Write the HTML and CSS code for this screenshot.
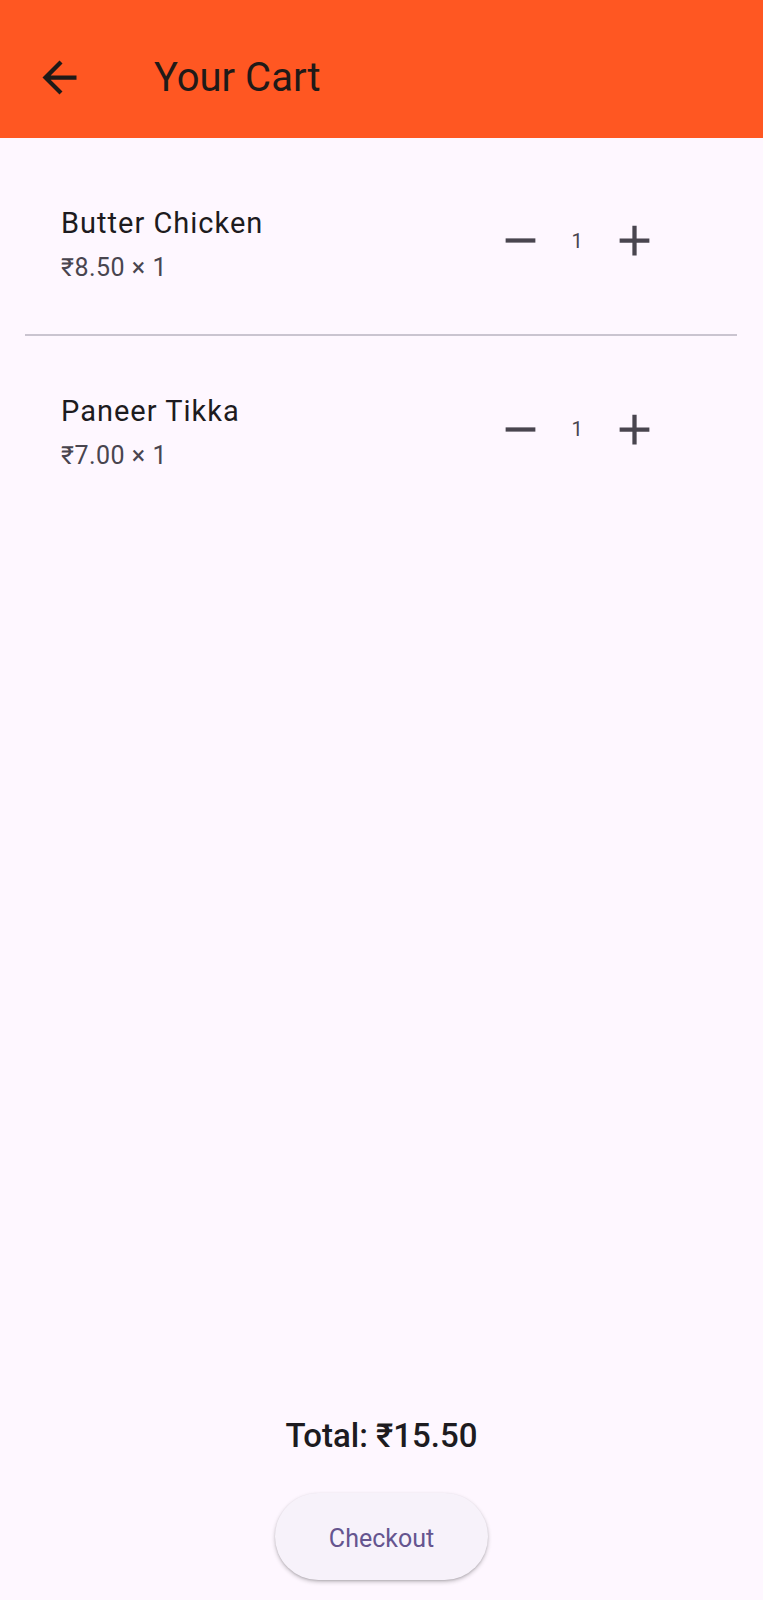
FILE: index.html
```html
<!DOCTYPE html>
<html lang="en">
<head>
<meta charset="utf-8">
<title>Your Cart</title>
<link rel="stylesheet" href="styles.css">
</head>
<body>
<div class="screen">
  <header class="appbar">
    <button class="back" aria-label="Back">
      <svg viewBox="0 0 24 24" width="51" height="51"><path d="M20 11H7.83l5.59-5.59L12 4l-8 8 8 8 1.41-1.41L7.83 13H20v-2z"/></svg>
    </button>
    <h1 class="title">Your Cart</h1>
  </header>
  <main class="list">
    <div class="tile">
      <div class="text">
        <div class="name">Butter Chicken</div>
        <div class="price">₹8.50 × 1</div>
      </div>
      <div class="qty">
        <button class="icon-btn" aria-label="Decrease"><svg viewBox="0 0 24 24" width="51" height="51"><path d="M19 13H5v-2h14v2z"/></svg></button>
        <span class="count">1</span>
        <button class="icon-btn" aria-label="Increase"><svg viewBox="0 0 24 24" width="51" height="51"><path d="M19 13h-6v6h-2v-6H5v-2h6V5h2v6h6v2z"/></svg></button>
      </div>
    </div>
    <div class="divider"></div>
    <div class="tile">
      <div class="text">
        <div class="name">Paneer Tikka</div>
        <div class="price">₹7.00 × 1</div>
      </div>
      <div class="qty">
        <button class="icon-btn" aria-label="Decrease"><svg viewBox="0 0 24 24" width="51" height="51"><path d="M19 13H5v-2h14v2z"/></svg></button>
        <span class="count">1</span>
        <button class="icon-btn" aria-label="Increase"><svg viewBox="0 0 24 24" width="51" height="51"><path d="M19 13h-6v6h-2v-6H5v-2h6V5h2v6h6v2z"/></svg></button>
      </div>
    </div>
  </main>
  <footer class="footer">
    <div class="total">Total: ₹15.50</div>
    <button class="checkout">Checkout</button>
  </footer>
</div>
</body>
</html>
```

FILE: styles.css
```css
* { box-sizing: border-box; }
html, body { margin: 0; padding: 0; }
body {
  background: #fef7ff;
  font-family: Roboto, "Noto Sans", "DejaVu Sans", sans-serif;
  color: #1d1b20;
}
button { font-family: inherit; border: none; background: none; padding: 0; margin: 0; cursor: pointer; }
.screen {
  height: 100vh;
  display: flex;
  flex-direction: column;
}
.appbar {
  height: 138px;
  flex: none;
  background: #ff5722;
  display: flex;
  align-items: center;
  padding-top: 17px;
  padding-left: 34px;
}
.back {
  width: 51px;
  height: 51px;
  display: flex;
  align-items: center;
  justify-content: center;
  fill: #1f1a18;
}
.back svg { display: block; }
.title {
  margin: 0 0 0 69px;
  font-size: 40px;
  font-weight: 400;
  color: #1f1a18;
  line-height: 1;
}
.list {
  flex: 1;
  padding: 9px 26px 0 25px;
}
.tile {
  height: 186px;
  display: flex;
  align-items: center;
  padding-left: 36px;
  padding-right: 52px;
}
.tile:first-child { height: 187px; }
.text { flex: 1; }
.name {
  font-size: 29px;
  line-height: 53px;
  letter-spacing: 1px;
  color: #1d1b20;
}
.price {
  font-size: 25px;
  line-height: 35px;
  letter-spacing: 0.5px;
  color: #49454f;
}
.qty {
  display: flex;
  align-items: center;
}
.icon-btn {
  width: 102px;
  height: 102px;
  display: flex;
  align-items: center;
  justify-content: center;
  fill: #49454f;
}
.icon-btn svg { display: block; }
.count {
  font-size: 20px;
  color: #49454f;
  width: 12px;
  text-align: center;
}
.divider {
  height: 2px;
  background: #cac4d0;
}
.footer {
  flex: none;
  display: flex;
  flex-direction: column;
  align-items: center;
  padding-bottom: 20px;
}
.total {
  font-size: 33px;
  font-weight: 500;
  line-height: 40px;
  color: #1d1b20;
  margin-bottom: 37px;
}
.checkout {
  width: 213px;
  height: 87px;
  padding-top: 4px;
  border-radius: 44px;
  background: #f7f2fa;
  color: #65558f;
  font-size: 25px;
  font-weight: 400;
  box-shadow: 0 2px 4px rgba(0,0,0,0.22), 0 1px 2px rgba(0,0,0,0.12);
}
```
